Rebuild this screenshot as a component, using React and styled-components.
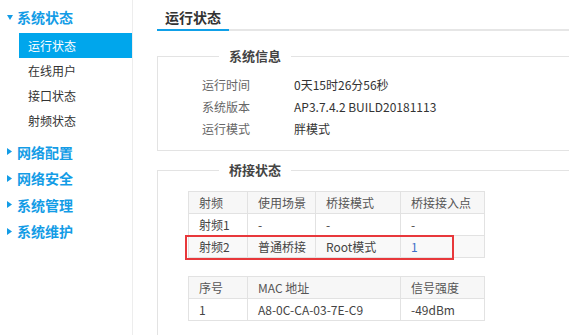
import React from "react";
import styled, { createGlobalStyle } from "styled-components";

const GlobalStyle = createGlobalStyle`
  html, body {
    margin: 0;
    padding: 0;
    background: #fff;
    font-family: "Microsoft YaHei", "Noto Sans CJK SC", sans-serif;
    font-size: 12px;
    color: #333;
  }
`;

const menu = [
  {
    title: "系统状态",
    open: true,
    items: ["运行状态", "在线用户", "接口状态", "射频状态"],
    active: 0,
  },
  { title: "网络配置" },
  { title: "网络安全" },
  { title: "系统管理" },
  { title: "系统维护" },
];

const Arrow = ({ open }) =>
  open ? (
    <svg width="6" height="5" viewBox="0 0 6 5">
      <path d="M0 0 L6 0 L3 5 Z" fill="#139ce6" />
    </svg>
  ) : (
    <svg width="5" height="7" viewBox="0 0 5 7">
      <path d="M0 0 L5 3.5 L0 7 Z" fill="#139ce6" />
    </svg>
  );

const App = () => {
  return (
    <Page>
      <GlobalStyle />
      <Sidebar>
        {menu.map((g) => (
          <div key={g.title}>
            <GroupHead>
              <ArrowBox>
                <Arrow open={g.open} />
              </ArrowBox>
              {g.title}
            </GroupHead>
            {g.open && (
              <SubList>
                {g.items.map((it, i) => (
                  <SubItem key={it} $active={i === g.active}>
                    {it}
                  </SubItem>
                ))}
              </SubList>
            )}
          </div>
        ))}
      </Sidebar>

      <Main>
        <TitleBar>
          <TitleTab>运行状态</TitleTab>
        </TitleBar>

        <Box $top={16}>
          <Legend>系统信息</Legend>
          <InfoRow>
            <Label>运行时间</Label>
            <Value>0天15时26分56秒</Value>
          </InfoRow>
          <InfoRow>
            <Label>系统版本</Label>
            <Value>AP3.7.4.2 BUILD20181113</Value>
          </InfoRow>
          <InfoRow>
            <Label>运行模式</Label>
            <Value>胖模式</Value>
          </InfoRow>
        </Box>

        <Box $top={10} $open>
          <Legend>桥接状态</Legend>
          <TableWrap>
            <Table>
              <colgroup>
                <col style={{ width: 59 }} />
                <col style={{ width: 68 }} />
                <col style={{ width: 85 }} />
                <col style={{ width: 84 }} />
              </colgroup>
              <thead>
                <tr>
                  <Th>射频</Th>
                  <Th>使用场景</Th>
                  <Th>桥接模式</Th>
                  <Th>桥接接入点</Th>
                </tr>
              </thead>
              <tbody>
                <Tr>
                  <Td>射频1</Td>
                  <Td>-</Td>
                  <Td>-</Td>
                  <Td>-</Td>
                </Tr>
                <Tr $striped>
                  <Td>射频2</Td>
                  <Td>普通桥接</Td>
                  <Td>Root模式</Td>
                  <Td $link>1</Td>
                </Tr>
              </tbody>
            </Table>
            <Highlight />
          </TableWrap>

          <Table $gap={18}>
            <colgroup>
              <col style={{ width: 59 }} />
              <col style={{ width: 153 }} />
              <col style={{ width: 84 }} />
            </colgroup>
            <thead>
              <tr>
                <Th>序号</Th>
                <Th>MAC 地址</Th>
                <Th>信号强度</Th>
              </tr>
            </thead>
            <tbody>
              <Tr>
                <Td>1</Td>
                <Td>A8-0C-CA-03-7E-C9</Td>
                <Td>-49dBm</Td>
              </Tr>
            </tbody>
          </Table>
        </Box>
      </Main>
    </Page>
  );
};

const Page = styled.div`
  display: flex;
  height: 335px;
  overflow: hidden;
`;

const Sidebar = styled.nav`
  width: 133px;
  flex: none;
  border-right: 1px solid #ededed;
  padding-top: 4px;
  box-sizing: border-box;
`;

const GroupHead = styled.div`
  display: flex;
  align-items: center;
  height: 26.5px;
  padding-left: 7px;
  font-size: 14px;
  font-weight: bold;
  color: #139ce6;
`;

const ArrowBox = styled.span`
  display: inline-flex;
  width: 10px;
  align-items: center;
`;

const SubList = styled.div`
  padding: 2px 0 6px 19px;
`;

const SubItem = styled.div`
  height: 25px;
  line-height: 25px;
  padding-left: 9px;
  font-size: 12px;
  color: ${(p) => (p.$active ? "#fff" : "#333")};
  background: ${(p) => (p.$active ? "#00a6ec" : "transparent")};
`;

const Main = styled.main`
  flex: 1;
  min-width: 0;
  padding-left: 24px;
  overflow: hidden;
`;

const TitleBar = styled.div`
  border-bottom: 2px solid #e6e6e6;
  width: 480px;
`;

const TitleTab = styled.div`
  display: inline-block;
  padding: 8px 8px 3px;
  line-height: 18px;
  font-size: 14px;
  font-weight: bold;
  color: #333;
  border-bottom: 2px solid #0fa0e8;
  margin-bottom: -2px;
  vertical-align: bottom;
`;

const Box = styled.fieldset`
  margin: ${(p) => p.$top}px 0 0;
  width: 460px;
  box-sizing: border-box;
  border: 1px solid #e3e3e3;
  padding: 9px 0 10px 30px;
  min-height: ${(p) => (p.$open ? "240px" : "0")};
`;

const Legend = styled.legend`
  margin-left: 31px;
  padding: 0 10px;
  line-height: 18px;
  font-size: 13px;
  font-weight: bold;
  color: #444;
`;

const InfoRow = styled.div`
  display: flex;
  height: 22px;
  line-height: 22px;
  padding-left: 14px;
`;

const Label = styled.span`
  width: 92px;
  color: #666;
`;

const Value = styled.span`
  color: #333;
`;

const TableWrap = styled.div`
  position: relative;
  width: 296px;
  margin-top: 3px;
`;

const Table = styled.table`
  border-collapse: collapse;
  table-layout: fixed;
  width: 296px;
  margin-top: ${(p) => p.$gap || 0}px;
  border: 1px solid #e2e2e2;
`;

const Th = styled.th`
  height: 21px;
  padding: 0 10px;
  text-align: left;
  font-weight: normal;
  color: #555;
  background: #f7f7f7;
  border: 1px solid #e2e2e2;
  white-space: nowrap;
  overflow: hidden;
`;

const Tr = styled.tr`
  background: ${(p) => (p.$striped ? "#f9f9f9" : "#fff")};
`;

const Td = styled.td`
  height: 21px;
  padding: 0 10px;
  color: ${(p) => (p.$link ? "#3d6fc8" : "#444")};
  border: 1px solid #e2e2e2;
  white-space: nowrap;
`;

const Highlight = styled.div`
  position: absolute;
  left: -3px;
  top: 44px;
  width: 269px;
  height: 25px;
  box-sizing: border-box;
  border: 2px solid #e8383b;
  pointer-events: none;
`;

export default App;
